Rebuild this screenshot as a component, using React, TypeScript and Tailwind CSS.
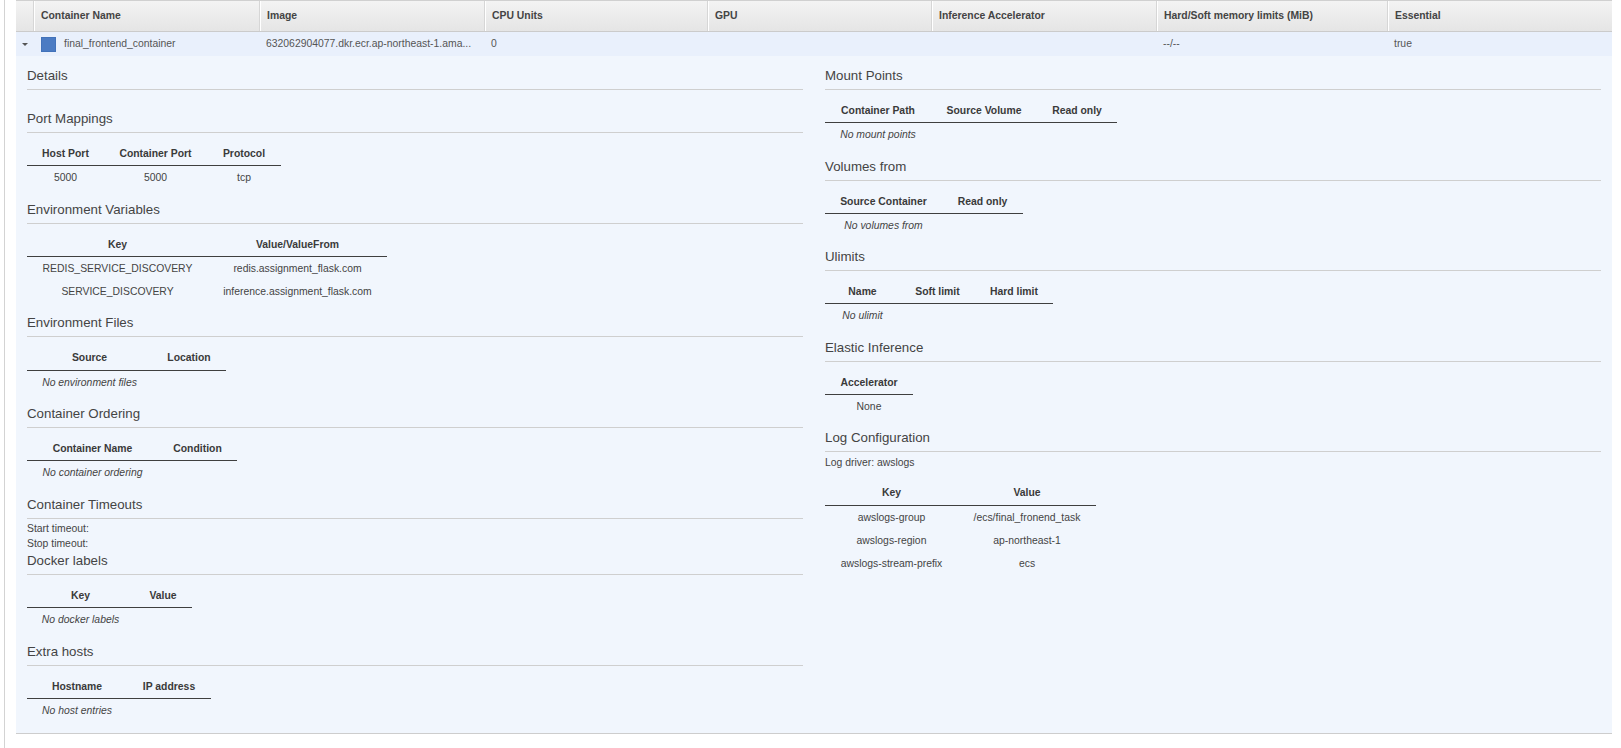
import React from "react";

type Col = { w: string; h: string };

function Heading({ children, className = "" }: { children: React.ReactNode; className?: string }) {
  return (
    <h3
      className={`text-[13.3px] leading-[16px] pb-[5px] border-b border-b-[#cfcfcf] text-[#444] font-normal whitespace-nowrap ${className}`}
    >
      {children}
    </h3>
  );
}

function DTable({
  cols,
  rows = [],
  empty,
  className = "mt-[9px]",
}: {
  cols: Col[];
  rows?: string[][];
  empty?: string;
  className?: string;
}) {
  return (
    <div className={`w-fit text-[10.4px] text-[#444] ${className}`}>
      <div className="flex border-b border-b-[#3f3f3f]">
        {cols.map((c, i) => (
          <div
            key={i}
            className={`${c.w} shrink-0 h-[23.3px] leading-[23.3px] text-center font-bold text-[#3a3a3a] whitespace-nowrap`}
          >
            {c.h}
          </div>
        ))}
      </div>
      {rows.map((r, ri) => (
        <div key={ri} className="flex">
          {r.map((v, i) => (
            <div
              key={i}
              className={`${cols[i].w} shrink-0 h-[23.3px] leading-[23.3px] text-center whitespace-nowrap`}
            >
              {v}
            </div>
          ))}
        </div>
      ))}
      {empty && (
        <div className="flex">
          <div className={`${cols[0].w} shrink-0 h-[23.3px] leading-[23.3px] text-center italic whitespace-nowrap`}>
            {empty}
          </div>
        </div>
      )}
    </div>
  );
}

const headers = [
  "",
  "Container Name",
  "Image",
  "CPU Units",
  "GPU",
  "Inference Accelerator",
  "Hard/Soft memory limits (MiB)",
  "Essential",
];

export default function App() {
  return (
    <div className="min-h-[748px] bg-white pl-[4px] font-['Liberation_Sans',Arial,sans-serif]">
      <div className="min-h-[748px] border-l border-l-[#d3d3d3] pl-[11px] pr-[9px]">
        {/* main table header */}
        <div className="grid grid-cols-[18px_226px_225px_223px_224px_225px_231px_224px] h-[32px] border-t border-b border-t-[#d0d0d0] border-b-[#cbcbcb] bg-gradient-to-b from-[#f3f3f3] to-[#e5e5e5]">
          {headers.map((h, i) => (
            <div
              key={i}
              className={`leading-[30px] text-[10.4px] font-bold text-[#444] whitespace-nowrap overflow-hidden pl-[6px] ${
                i > 0 ? "border-l border-l-white" : ""
              } ${i < headers.length - 1 ? "border-r border-r-[#d6d6d6]" : ""}`}
            >
              {h}
            </div>
          ))}
        </div>
        {/* main row */}
        <div className="grid grid-cols-[18px_226px_225px_223px_224px_225px_231px_224px] h-[24px] bg-[#e9f0fc] text-[10.4px] leading-[24px] text-[#555]">
          <div className="flex items-center justify-center">
            <div className="w-0 h-0 border-l-[3px] border-r-[3px] border-t-[3px] border-l-transparent border-r-transparent border-t-[#555]" />
          </div>
          <div className="flex items-center pl-[7px] whitespace-nowrap">
            <div className="w-[15px] h-[15px] bg-[#4b7bc3] border border-[#4272ba] shrink-0" />
            <span className="ml-[8px]">final_frontend_container</span>
          </div>
          <div className="pl-[6px] whitespace-nowrap overflow-hidden">632062904077.dkr.ecr.ap-northeast-1.ama...</div>
          <div className="pl-[6px]">0</div>
          <div className="pl-[6px]"></div>
          <div className="pl-[6px]"></div>
          <div className="pl-[6px]">--/--</div>
          <div className="pl-[6px]">true</div>
        </div>
        {/* details panel */}
        <div className="grid grid-cols-2 bg-[#f1f6fd] pt-[12px] pb-[11px] border-b border-b-[#cdcdcd]">
          {/* left column */}
          <div className="px-[11px]">
            <Heading>Details</Heading>
            <div className="h-[9px]" />

            <Heading className="mt-[12px]">Port Mappings</Heading>
            <DTable
              cols={[
                { w: "w-[77px]", h: "Host Port" },
                { w: "w-[103px]", h: "Container Port" },
                { w: "w-[74px]", h: "Protocol" },
              ]}
              rows={[["5000", "5000", "tcp"]]}
            />

            <Heading className="mt-[12px]">Environment Variables</Heading>
            <DTable
              cols={[
                { w: "w-[181px]", h: "Key" },
                { w: "w-[179px]", h: "Value/ValueFrom" },
              ]}
              rows={[
                ["REDIS_SERVICE_DISCOVERY", "redis.assignment_flask.com"],
                ["SERVICE_DISCOVERY", "inference.assignment_flask.com"],
              ]}
            />

            <Heading className="mt-[12px]">Environment Files</Heading>
            <DTable
              cols={[
                { w: "w-[125px]", h: "Source" },
                { w: "w-[74px]", h: "Location" },
              ]}
              empty="No environment files"
            />

            <Heading className="mt-[12px]">Container Ordering</Heading>
            <DTable
              cols={[
                { w: "w-[131px]", h: "Container Name" },
                { w: "w-[79px]", h: "Condition" },
              ]}
              empty="No container ordering"
            />

            <Heading className="mt-[12px]">Container Timeouts</Heading>
            <div className="mt-[2px] text-[10.4px] leading-[15px] text-[#444]">
              <div>Start timeout:</div>
              <div>Stop timeout:</div>
            </div>

            <Heading className="mt-[2.5px]">Docker labels</Heading>
            <DTable
              cols={[
                { w: "w-[107px]", h: "Key" },
                { w: "w-[58px]", h: "Value" },
              ]}
              empty="No docker labels"
            />

            <Heading className="mt-[12px]">Extra hosts</Heading>
            <DTable
              cols={[
                { w: "w-[100px]", h: "Hostname" },
                { w: "w-[84px]", h: "IP address" },
              ]}
              empty="No host entries"
            />
          </div>

          {/* right column */}
          <div className="px-[11px]">
            <Heading>Mount Points</Heading>
            <DTable
              cols={[
                { w: "w-[106px]", h: "Container Path" },
                { w: "w-[106px]", h: "Source Volume" },
                { w: "w-[80px]", h: "Read only" },
              ]}
              empty="No mount points"
            />

            <Heading className="mt-[12px]">Volumes from</Heading>
            <DTable
              cols={[
                { w: "w-[117px]", h: "Source Container" },
                { w: "w-[81px]", h: "Read only" },
              ]}
              empty="No volumes from"
            />

            <Heading className="mt-[12px]">Ulimits</Heading>
            <DTable
              cols={[
                { w: "w-[75px]", h: "Name" },
                { w: "w-[75px]", h: "Soft limit" },
                { w: "w-[78px]", h: "Hard limit" },
              ]}
              empty="No ulimit"
            />

            <Heading className="mt-[12px]">Elastic Inference</Heading>
            <DTable cols={[{ w: "w-[88px]", h: "Accelerator" }]} rows={[["None"]]} />

            <Heading className="mt-[12px]">Log Configuration</Heading>
            <div className="mt-[3px] text-[10.4px] leading-[15px] text-[#444]">Log driver: awslogs</div>
            <DTable
              className="mt-[11px]"
              cols={[
                { w: "w-[133px]", h: "Key" },
                { w: "w-[138px]", h: "Value" },
              ]}
              rows={[
                ["awslogs-group", "/ecs/final_fronend_task"],
                ["awslogs-region", "ap-northeast-1"],
                ["awslogs-stream-prefix", "ecs"],
              ]}
            />
          </div>
        </div>
      </div>
    </div>
  );
}
